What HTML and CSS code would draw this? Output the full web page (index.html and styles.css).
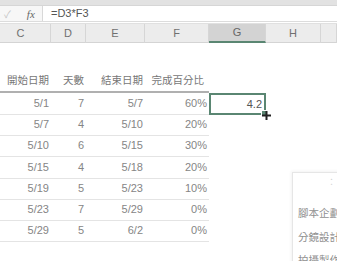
FILE: index.html
```html
<!DOCTYPE html>
<html lang="zh-Hant">
<head>
    <meta charset="UTF-8">
    <meta name="viewport" content="width=device-width, initial-scale=1.0">
    <title>工作表</title>
    <link rel="stylesheet" href="styles.css">
</head>
<body>
    <div class="topbar"></div>
    <div class="formula">
        <div class="fb-tools">
            <span class="check">✓</span>
            <span class="fx">fx</span>
        </div>
        <div class="fb-input">=D3*F3</div>
    </div>

    <div class="cols">
        <div class="col c-first">C</div>
        <div class="col">D</div>
        <div class="col">E</div>
        <div class="col">F</div>
        <div class="col on">G</div>
        <div class="col">H</div>
        <div class="col"></div>
    </div>

    <div class="sheet">
        <div class="row spacer"></div>
        <div class="row head">
            <div class="cell">開始日期</div>
            <div class="cell">天數</div>
            <div class="cell">結束日期</div>
            <div class="cell pct-h">完成百分比</div>
        </div>
        <div class="row">
            <div class="cell">5/1</div><div class="cell">7</div><div class="cell">5/7</div><div class="cell">60%</div>
            <div class="cell sel">4.2<span class="handle"></span>
                <svg class="cursor" width="9" height="9" viewBox="0 0 9 9"><path d="M3.5 0h2v3.5H9v2H5.5V9h-2V5.5H0v-2h3.5z" fill="#222"/></svg>
            </div>
        </div>
        <div class="row">
            <div class="cell">5/7</div><div class="cell">4</div><div class="cell">5/10</div><div class="cell">20%</div>
        </div>
        <div class="row">
            <div class="cell">5/10</div><div class="cell">6</div><div class="cell">5/15</div><div class="cell">30%</div>
        </div>
        <div class="row">
            <div class="cell">5/15</div><div class="cell">4</div><div class="cell">5/18</div><div class="cell">20%</div>
        </div>
        <div class="row">
            <div class="cell">5/19</div><div class="cell">5</div><div class="cell">5/23</div><div class="cell">10%</div>
        </div>
        <div class="row">
            <div class="cell">5/23</div><div class="cell">7</div><div class="cell">5/29</div><div class="cell">0%</div>
        </div>
        <div class="row">
            <div class="cell">5/29</div><div class="cell">5</div><div class="cell">6/2</div><div class="cell">0%</div>
        </div>
    </div>

    <div class="panel">
        <div class="panel-top">：</div>
        <div class="panel-item">腳本企劃</div>
        <div class="panel-item">分鏡設計</div>
        <div class="panel-item">拍攝製作</div>
    </div>
</body>
</html>
```

FILE: styles.css
```css
html,body,div,span{margin:0; padding:0;}
body{width:337px; height:261px; overflow:hidden; background:#fff; position:relative;
    font-family:"Liberation Sans", "Noto Sans CJK TC", sans-serif; font-size:11px; color:#858585;}

.topbar{height:5px; background:#e2e2e2; border-bottom:1px solid #d6d6d6;}

/* formula bar */
.formula{display:flex; height:15px; border-bottom:1px solid #dcdcdc;}
.fb-tools{width:42px; display:flex; align-items:center; background:#f7f7f7; border-right:1px solid #d8d8d8;}
.check{margin-left:4px; color:#c4c4c4; font-size:10px;}
.fx{margin-left:16px; font-family:"Liberation Serif", serif; font-style:italic; font-size:11px; color:#666;}
.fb-input{padding-left:8px; line-height:15px; color:#555; font-size:11px;}

/* column letters */
.cols{display:grid; grid-template-columns:51px 35px 59px 64px 57px 55px 1fr; height:18px;
    background:#ececec; border-top:1px solid #e0e0e0; border-bottom:1px solid #d4d4d4; margin-top:1px;}
.col{text-align:center; line-height:18px; color:#707070; border-right:1px solid #d6d6d6;}
.c-first{padding-right:9px;}
.col.on{background:#d3d3d3; border-bottom:2px solid #5a8672; line-height:17px; color:#666;}

/* table */
.sheet{display:flex; flex-direction:column;}
.row{display:grid; grid-template-columns:51px 35px 59px 64px 57px; height:21.2px;}
.row.spacer{height:26px;}
.row.head{height:24px;}
.cell{text-align:right; padding-right:2px; border-bottom:1px solid #e4e4e4; line-height:21px; font-size:11px;}
.head .cell{border-bottom:2px solid #b0b0b0; font-family:"Noto Sans CJK TC", sans-serif; font-size:10.5px;
    color:#777; line-height:22px;}
.head .pct-h{padding-right:5px;}

.cell.sel{position:relative; border:2px solid #5a8672; color:#555; line-height:18px; padding-right:2px;}
.handle{position:absolute; right:-4px; bottom:-4px; width:5px; height:5px; background:#5a8672; border:1px solid #fff;}
.cursor{position:absolute; right:-7px; bottom:-7px;}

/* floating panel */
.panel{position:absolute; left:292px; top:172px; width:80px; height:120px; background:#fff;
    border-left:1px solid #e6e6e6; border-top:1px solid #e6e6e6; box-shadow:-1px -1px 3px rgba(0,0,0,.05);
    font-family:"Noto Sans CJK TC", sans-serif; font-size:10.5px; color:#909090;}
.panel-top{height:30px; text-align:right; padding-right:37px; line-height:18px; color:#d0d0d0; font-size:9px;}
.panel-item{padding-left:5px; height:23.5px; line-height:20px;}
```
